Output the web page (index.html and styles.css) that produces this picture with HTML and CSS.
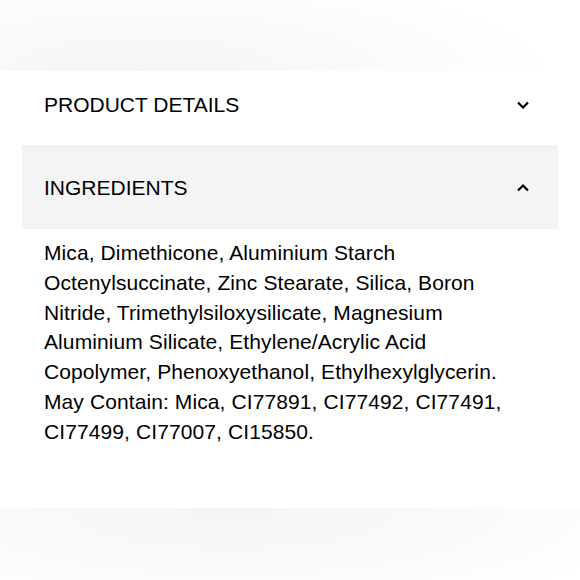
FILE: index.html
```html
<!DOCTYPE html>
<html>
<head>
<meta charset="utf-8">
<link rel="stylesheet" href="styles.css">
</head>
<body>
<div class="shade shade-top"></div>
<main class="panel">
  <div class="row row-closed">
    <span class="row-title">PRODUCT DETAILS</span>
    <svg class="chev" width="14" height="10" viewBox="0 0 14 10"><path d="M2 2.5 L7 7.5 L12 2.5" fill="none" stroke="#000" stroke-width="2.2"/></svg>
  </div>
  <div class="row row-open">
    <span class="row-title">INGREDIENTS</span>
    <svg class="chev" width="14" height="10" viewBox="0 0 14 10"><path d="M2 7.5 L7 2.5 L12 7.5" fill="none" stroke="#000" stroke-width="2.2"/></svg>
  </div>
  <p class="body">Mica, Dimethicone, Aluminium Starch Octenylsuccinate, Zinc Stearate, Silica, Boron Nitride, Trimethylsiloxysilicate, Magnesium Aluminium Silicate, Ethylene/Acrylic Acid Copolymer, Phenoxyethanol, Ethylhexylglycerin. May Contain: Mica, CI77891, CI77492, CI77491, CI77499, CI77007, CI15850.</p>
</main>
<div class="shade shade-bottom"></div>
</body>
</html>
```
FILE: styles.css
```css
html, body {
  margin: 0;
  padding: 0;
  background: #fff;
  font-family: "Liberation Sans", Arial, sans-serif;
  color: #000;
}
.shade {
  height: 71px;
}
.shade-top {
  background: radial-gradient(ellipse 70% 140% at 25% 100%, #f5f5f5 0%, #fafafa 55%, #ffffff 100%);
}
.shade-bottom {
  height: 72px;
  background: radial-gradient(ellipse 75% 150% at 40% 0%, #f5f5f5 0%, #fafafa 60%, #ffffff 100%);
}
.panel {
  background: #fff;
  padding: 0 22px;
  height: 437px;
  box-sizing: border-box;
}
.row {
  display: flex;
  align-items: center;
  justify-content: space-between;
  padding: 0 28px 0 22px;
  box-sizing: border-box;
}
.row-closed {
  height: 76px;
  padding-bottom: 8px;
  border-bottom: 1px solid #e9e9e9;
}
.row-open {
  height: 82px;
  background: #f4f4f4;
}
.row-title {
  font-size: 21px;
}
.chev {
  display: block;
}
.body {
  margin: 0;
  padding: 9px 22px 0 22px;
  font-size: 21px;
  line-height: 29.8px;
  letter-spacing: 0.1px;
}
```
